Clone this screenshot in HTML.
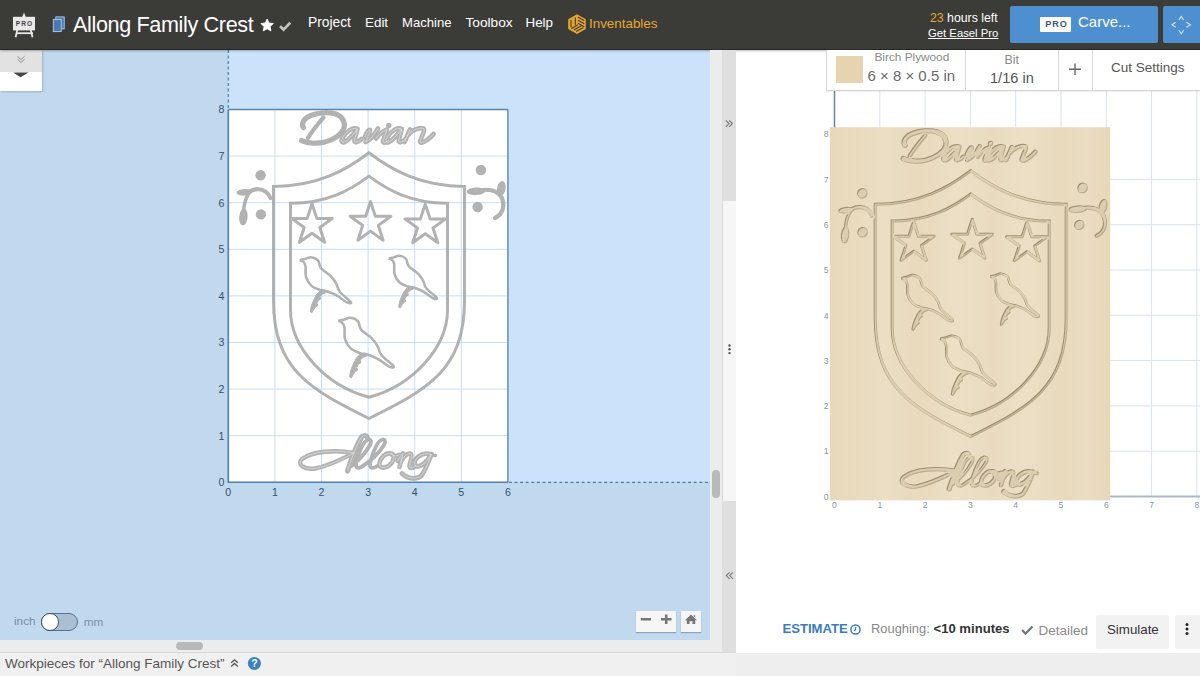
<!DOCTYPE html>
<html><head><meta charset="utf-8">
<style>
*{box-sizing:border-box;margin:0;padding:0}
html,body{width:1200px;height:676px;overflow:hidden;background:#fff;font-family:"Liberation Sans",sans-serif}
.a{position:absolute}
.t{position:absolute;white-space:pre;font-family:"Liberation Sans",sans-serif}
</style></head><body>
<!-- LEFT PANE -->
<div class="a" style="left:0;top:50px;width:710px;height:590px;background:#c0d9ef"></div>
<div class="a" style="left:228px;top:50px;width:482px;height:432px;background:#cae3fa"></div>


<!-- CANVAS LEFT -->
<svg class="a" style="left:0;top:0" width="710" height="640" viewBox="0 0 710 640">
 <rect x="228.3" y="109.5" width="279.6" height="372.8" fill="#fff"/>
 <g stroke="#c9ddf0" stroke-width="1"><line x1="274.9" y1="109.5" x2="274.9" y2="482.3"/><line x1="321.5" y1="109.5" x2="321.5" y2="482.3"/><line x1="368.1" y1="109.5" x2="368.1" y2="482.3"/><line x1="414.7" y1="109.5" x2="414.7" y2="482.3"/><line x1="461.3" y1="109.5" x2="461.3" y2="482.3"/><line x1="228.3" y1="435.7" x2="507.9" y2="435.7"/><line x1="228.3" y1="389.1" x2="507.9" y2="389.1"/><line x1="228.3" y1="342.5" x2="507.9" y2="342.5"/><line x1="228.3" y1="295.9" x2="507.9" y2="295.9"/><line x1="228.3" y1="249.3" x2="507.9" y2="249.3"/><line x1="228.3" y1="202.7" x2="507.9" y2="202.7"/><line x1="228.3" y1="156.1" x2="507.9" y2="156.1"/></g>
 <g id="artL" opacity="0.82"><path d="M369,418.5 C310.2,389.4 273.5,369.8 273.5,300.2 L273.5,186.4 C317.9,186.4 347,169.6 369,152.8 C391.0,169.6 420.1,186.4 464.5,186.4 L464.5,300.2 C464.5,369.8 427.8,389.4 369,418.5Z" fill="none" stroke="#a2a2a2" stroke-width="3"/>
<path d="M369,397.2 C326.5,386.3 290.5,348 290.5,310 L290.5,203.2 C327.1,203.3 351,189.7 369,176.1 C387.0,189.7 410.9,203.3 447.5,203.2 L447.5,310 C447.5,348 411.5,386.3 369,397.2Z" fill="none" stroke="#a2a2a2" stroke-width="3"/>
<path d="M312.0,203.6 L316.8,218.4 L332.4,218.4 L319.8,227.5 L324.6,242.3 L312.0,233.2 L299.4,242.3 L304.2,227.5 L291.6,218.4 L307.2,218.4Z" fill="none" stroke="#a2a2a2" stroke-width="3" stroke-linejoin="round"/>
<path d="M370.5,201.5 L375.3,216.3 L390.9,216.3 L378.3,225.4 L383.1,240.2 L370.5,231.1 L357.9,240.2 L362.7,225.4 L350.1,216.3 L365.7,216.3Z" fill="none" stroke="#a2a2a2" stroke-width="3" stroke-linejoin="round"/>
<path d="M425.2,204.1 L430.1,218.9 L445.6,218.9 L433.0,228.0 L437.8,242.8 L425.2,233.7 L412.7,242.8 L417.5,228.0 L404.9,218.9 L420.4,218.9Z" fill="none" stroke="#a2a2a2" stroke-width="3" stroke-linejoin="round"/>
<path d="M299.8,260.1 C300.6,259.9 302.7,259.6 304.6,259.1 C306.5,258.6 309.1,256.9 311.3,257.2 C313.6,257.4 316.5,258.8 318.1,260.6 C319.7,262.5 318.9,265.7 321.0,268.3 C323.1,270.9 328.1,273.4 330.6,276.0 C333.2,278.6 334.8,281.1 336.3,283.7 C337.8,286.3 337.3,288.8 339.7,291.8 C342.1,294.8 349.6,300.1 350.8,301.9 C352.0,303.7 349.3,303.5 346.9,302.4 C344.5,301.3 339.7,297.1 336.3,295.2 C332.9,293.3 329.4,292.1 326.7,291.2 C324.0,290.3 322.6,290.8 320.0,289.9 C317.4,289.0 313.6,287.8 311.3,285.6 C309.0,283.4 307.0,280.1 306.0,276.9 C305.0,273.7 305.9,268.8 305.5,266.3 C305.1,263.8 304.6,263.0 303.7,262.0 C302.8,261.0 300.4,260.4 299.8,260.1" fill="none" stroke="#a2a2a2" stroke-width="2.6" stroke-linejoin="round"/>
<path d="M320.5,290.3 L316.5,294.5 L313.2,301.0 L311.3,306.0 L310.2,311.8 L311.8,312.8 L313.8,309.5 L315.6,306.8 L317.8,305.8 L316.8,303.2 L318.6,300.0 L320.6,299.0 L320.0,296.2 L323.0,293.8 L326.5,292.3 L324.0,290.2Z" fill="#a2a2a2" stroke="#a2a2a2" stroke-width="1" stroke-linejoin="round"/>
<path d="M388.8,258.5 C389.6,258.3 391.5,258.0 393.3,257.6 C395.1,257.1 397.5,255.5 399.6,255.8 C401.7,256.0 404.5,257.2 406.0,259.0 C407.5,260.7 406.8,263.8 408.7,266.2 C410.7,268.6 415.4,271.0 417.8,273.4 C420.1,275.9 421.7,278.2 423.1,280.7 C424.5,283.2 424.0,285.4 426.3,288.3 C428.6,291.1 435.6,296.1 436.7,297.8 C437.9,299.5 435.3,299.3 433.1,298.3 C430.8,297.2 426.3,293.2 423.1,291.5 C419.9,289.7 416.6,288.6 414.1,287.7 C411.5,286.9 410.2,287.4 407.8,286.5 C405.4,285.6 401.8,284.5 399.6,282.5 C397.4,280.4 395.5,277.3 394.6,274.3 C393.7,271.3 394.5,266.7 394.2,264.3 C393.8,262.0 393.4,261.3 392.5,260.3 C391.6,259.3 389.4,258.8 388.8,258.5" fill="none" stroke="#a2a2a2" stroke-width="2.6" stroke-linejoin="round"/>
<path d="M408.3,286.9 L404.5,290.8 L401.4,296.9 L399.6,301.6 L398.6,307.1 L400.1,308.0 L402.0,304.9 L403.7,302.4 L405.7,301.5 L404.8,299.0 L406.5,296.0 L408.4,295.1 L407.8,292.4 L410.6,290.2 L413.9,288.8 L411.5,286.8Z" fill="#a2a2a2" stroke="#a2a2a2" stroke-width="1" stroke-linejoin="round"/>
<path d="M338.3,320.9 C339.2,320.7 341.4,320.3 343.5,319.8 C345.6,319.3 348.3,317.5 350.7,317.8 C353.2,318.0 356.3,319.4 358.1,321.4 C359.8,323.4 358.9,327.0 361.2,329.8 C363.4,332.5 368.8,335.3 371.6,338.1 C374.3,340.8 376.1,343.5 377.7,346.4 C379.4,349.2 378.8,351.9 381.4,355.1 C384.0,358.4 392.1,364.1 393.4,366.0 C394.7,368.0 391.8,367.8 389.2,366.6 C386.6,365.4 381.4,360.8 377.7,358.8 C374.1,356.8 370.3,355.4 367.4,354.5 C364.4,353.5 362.9,354.1 360.1,353.1 C357.3,352.1 353.2,350.8 350.7,348.4 C348.2,346.1 346.0,342.5 345.0,339.0 C344.0,335.6 344.9,330.3 344.5,327.6 C344.0,324.9 343.5,324.1 342.5,323.0 C341.5,321.8 339.0,321.2 338.3,320.9" fill="none" stroke="#a2a2a2" stroke-width="2.6" stroke-linejoin="round"/>
<path d="M360.7,353.5 L356.3,358.1 L352.8,365.1 L350.7,370.5 L349.5,376.7 L351.3,377.8 L353.4,374.3 L355.4,371.3 L357.7,370.3 L356.7,367.4 L358.6,364.0 L360.8,362.9 L360.1,359.9 L363.4,357.3 L367.1,355.7 L364.4,353.4Z" fill="#a2a2a2" stroke="#a2a2a2" stroke-width="1" stroke-linejoin="round"/>
<circle cx="260.6" cy="175.3" r="5.2" fill="#a2a2a2"/>
<circle cx="260.9" cy="214.4" r="5.2" fill="#a2a2a2"/>
<ellipse cx="244.5" cy="192.3" rx="8" ry="3.3" transform="rotate(-4 244.5 192.3)" fill="#a2a2a2"/>
<path d="M247,194 C252,188 265,186 270.5,198" fill="none" stroke="#a2a2a2" stroke-width="4.2" stroke-linecap="round"/>
<path d="M248.5,194 C245,199 244,205 243.5,212" fill="none" stroke="#a2a2a2" stroke-width="3.5" stroke-linecap="round"/>
<ellipse cx="243.4" cy="217" rx="4.2" ry="8.5" transform="rotate(5 243.4 217)" fill="#a2a2a2"/>
<circle cx="480.9" cy="170" r="5.3" fill="#a2a2a2"/>
<circle cx="477.6" cy="207" r="5.2" fill="#a2a2a2"/>
<ellipse cx="476" cy="191.3" rx="9.5" ry="3.8" transform="rotate(-3 476 191.3)" fill="#a2a2a2"/>
<path d="M472,192 C486,188 497,189 502,198 C505,206 503,214 495,218" fill="none" stroke="#a2a2a2" stroke-width="4.2" stroke-linecap="round"/>
<ellipse cx="501.3" cy="188.5" rx="4.3" ry="7.5" transform="rotate(10 501.3 188.5)" fill="#a2a2a2"/>
<path d="M303.5,127.5 C300.5,124 304,118 311.5,115.3 C318,113 328,112 335,113.8 C342,116 345.5,121 344,128 C342,134 334,140 324,142.3 C316,144 306,143 301.5,140.5" fill="none" stroke="#a2a2a2" stroke-width="5.2" stroke-linecap="round"/>
<path d="M323.5,117.5 C318,124 312,131 308,138" fill="none" stroke="#a2a2a2" stroke-width="4.2" stroke-linecap="round"/>
<path d="M357.5,129 C352.5,127 346.5,131 342.5,138 C340.5,141 342.5,143.5 345.5,141.5 C349.5,139 354.5,133 357.5,129 L354.5,140 C354.0,143 357.5,143 361.5,139" fill="none" stroke="#a2a2a2" stroke-width="4.7" stroke-linecap="round" stroke-linejoin="round"/>
<path d="M365,136.5 C367,132 369,129 370,130 C370.5,131 368,137 365.5,142 C370,140 375,134 378,128.5" fill="none" stroke="#a2a2a2" stroke-width="4.7" stroke-linecap="round" stroke-linejoin="round"/>
<path d="M376,138.5 C379,134 383,131 387,129.5 L383,141 C382.5,143.5 386,143 389,140" fill="none" stroke="#a2a2a2" stroke-width="4.7" stroke-linecap="round" stroke-linejoin="round"/>
<path d="M401.8,129 C396.8,127 390.8,131 386.8,138 C384.8,141 386.8,143.5 389.8,141.5 C393.8,139 398.8,133 401.8,129 L398.8,140 C398.3,143 401.8,143 405.8,139" fill="none" stroke="#a2a2a2" stroke-width="4.7" stroke-linecap="round" stroke-linejoin="round"/>
<path d="M404.5,142 L410,129.5 M407,136 C412,130 419,127 423.5,128.5 C425,129.5 424,132 422.5,135 L420,141.5 C420,143.5 424,142.5 427,140 C430,138 432,136 433.5,134" fill="none" stroke="#a2a2a2" stroke-width="4.7" stroke-linecap="round" stroke-linejoin="round"/>
<path d="M357.5,129 C352.5,127 346.5,131 342.5,138 C340.5,141 342.5,143.5 345.5,141.5 C349.5,139 354.5,133 357.5,129 L354.5,140 C354.0,143 357.5,143 361.5,139" fill="none" stroke="#fff" stroke-opacity="0.55" stroke-width="0.8" stroke-linecap="round" stroke-linejoin="round"/>
<path d="M365,136.5 C367,132 369,129 370,130 C370.5,131 368,137 365.5,142 C370,140 375,134 378,128.5" fill="none" stroke="#fff" stroke-opacity="0.55" stroke-width="0.8" stroke-linecap="round" stroke-linejoin="round"/>
<path d="M376,138.5 C379,134 383,131 387,129.5 L383,141 C382.5,143.5 386,143 389,140" fill="none" stroke="#fff" stroke-opacity="0.55" stroke-width="0.8" stroke-linecap="round" stroke-linejoin="round"/>
<path d="M401.8,129 C396.8,127 390.8,131 386.8,138 C384.8,141 386.8,143.5 389.8,141.5 C393.8,139 398.8,133 401.8,129 L398.8,140 C398.3,143 401.8,143 405.8,139" fill="none" stroke="#fff" stroke-opacity="0.55" stroke-width="0.8" stroke-linecap="round" stroke-linejoin="round"/>
<path d="M404.5,142 L410,129.5 M407,136 C412,130 419,127 423.5,128.5 C425,129.5 424,132 422.5,135 L420,141.5 C420,143.5 424,142.5 427,140 C430,138 432,136 433.5,134" fill="none" stroke="#fff" stroke-opacity="0.55" stroke-width="0.8" stroke-linecap="round" stroke-linejoin="round"/>
<circle cx="388.8" cy="125.5" r="2.7" fill="#a2a2a2"/>
<path d="M354,453 C336,449.5 312,451 302,459 C296.5,464 304,470 315,468.5 C329,466 342,459 354,453" fill="none" stroke="#a2a2a2" stroke-width="4.4" stroke-linecap="round" stroke-linejoin="round"/>
<path d="M347.5,471 C351,460 356,446 361.5,437 C363,435 366,435 367,437" fill="none" stroke="#a2a2a2" stroke-width="5.2" stroke-linecap="round" stroke-linejoin="round"/>
<path d="M362,437.5 C358.5,446 354.5,456 352.5,464" fill="none" stroke="#a2a2a2" stroke-width="3.4" stroke-linecap="round" stroke-linejoin="round"/>
<path d="M351.5,466 C358,461 366,452 370,445 C372,441.5 371,439 368.5,439.5 C366,440 363.5,443 361.5,447.5 C359,453 356.5,460 356,464.5 C355.5,468.5 359.5,469 363.5,465.5" fill="none" stroke="#a2a2a2" stroke-width="3.8" stroke-linecap="round" stroke-linejoin="round"/>
<path d="M363.5,465.5 C371,461 380,452 384,445 C386,441.5 385,439 382.5,439.5 C380,440 377.5,443 375.5,447.5 C373,453 370.5,460 370,464.5 C369.5,468.5 373.5,469 378,465.5" fill="none" stroke="#a2a2a2" stroke-width="3.8" stroke-linecap="round" stroke-linejoin="round"/>
<path d="M391,453.5 C384,452.5 379,460 379.5,465 C380,469 388,468.5 392,462.5 C394.5,458.5 394.5,454 391,453.5 C393,456.5 396,456.5 399,455" fill="none" stroke="#a2a2a2" stroke-width="4.6" stroke-linecap="round" stroke-linejoin="round"/>
<path d="M397.5,461 C399.5,457 401.5,455 403,453.5 L399.5,467 M401,461.5 C404,455.5 408.5,452.5 411,454 C412.5,455.5 410.5,461.5 409.5,465.5 C409,469 413,468.5 416,465.5" fill="none" stroke="#a2a2a2" stroke-width="4.6" stroke-linecap="round" stroke-linejoin="round"/>
<path d="M430.5,454.5 C422.5,451 414,459 414.5,464 C415,468.5 422,466.5 427,460.5 L431.5,454 C428.5,462 425.5,470 421.5,475.5 C417.5,479.5 408,479.5 402,473.5" fill="none" stroke="#a2a2a2" stroke-width="4.8" stroke-linecap="round" stroke-linejoin="round"/>
<path d="M431,454 C433,455 434.5,456 435.5,455.5" fill="none" stroke="#a2a2a2" stroke-width="3.5" stroke-linecap="round" stroke-linejoin="round"/>
<path d="M354,453 C336,449.5 312,451 302,459 C296.5,464 304,470 315,468.5 C329,466 342,459 354,453" fill="none" stroke="#fff" stroke-opacity="0.55" stroke-width="0.8" stroke-linecap="round" stroke-linejoin="round"/>
<path d="M347.5,471 C351,460 356,446 361.5,437 C363,435 366,435 367,437" fill="none" stroke="#fff" stroke-opacity="0.55" stroke-width="0.8" stroke-linecap="round" stroke-linejoin="round"/>
<path d="M391,453.5 C384,452.5 379,460 379.5,465 C380,469 388,468.5 392,462.5 C394.5,458.5 394.5,454 391,453.5 C393,456.5 396,456.5 399,455" fill="none" stroke="#fff" stroke-opacity="0.55" stroke-width="0.8" stroke-linecap="round" stroke-linejoin="round"/>
<path d="M397.5,461 C399.5,457 401.5,455 403,453.5 L399.5,467 M401,461.5 C404,455.5 408.5,452.5 411,454 C412.5,455.5 410.5,461.5 409.5,465.5 C409,469 413,468.5 416,465.5" fill="none" stroke="#fff" stroke-opacity="0.55" stroke-width="0.8" stroke-linecap="round" stroke-linejoin="round"/>
<path d="M430.5,454.5 C422.5,451 414,459 414.5,464 C415,468.5 422,466.5 427,460.5 L431.5,454 C428.5,462 425.5,470 421.5,475.5 C417.5,479.5 408,479.5 402,473.5" fill="none" stroke="#fff" stroke-opacity="0.55" stroke-width="0.8" stroke-linecap="round" stroke-linejoin="round"/></g>
  <path d="M507.9 109.5 L507.9 482.3" stroke="#6f95b8" stroke-width="1.6"/>
 <path d="M228.3 109.5 L507.9 109.5" stroke="#5a84aa" stroke-width="1.6"/>
 <path d="M228.3 109.5 L228.3 482.3 L507.9 482.3" stroke="#4f7fae" stroke-width="1.6" fill="none"/>
 <path d="M228.3 50 L228.3 109.5" stroke="#4f7aa0" stroke-width="1.2" stroke-dasharray="3 2.5"/>
 <path d="M508.9 482.3 L710 482.3" stroke="#4f7aa0" stroke-width="1.3" stroke-dasharray="3 2.6"/>
 <g font-family="Liberation Sans" font-size="10.6" fill="#34506c" text-anchor="middle"><text x="228.3" y="496">0</text><text x="274.9" y="496">1</text><text x="321.5" y="496">2</text><text x="368.1" y="496">3</text><text x="414.7" y="496">4</text><text x="461.3" y="496">5</text><text x="507.9" y="496">6</text><text x="224.5" y="486.1" text-anchor="end">0</text><text x="224.5" y="439.5" text-anchor="end">1</text><text x="224.5" y="392.9" text-anchor="end">2</text><text x="224.5" y="346.3" text-anchor="end">3</text><text x="224.5" y="299.7" text-anchor="end">4</text><text x="224.5" y="253.1" text-anchor="end">5</text><text x="224.5" y="206.5" text-anchor="end">6</text><text x="224.5" y="159.9" text-anchor="end">7</text><text x="224.5" y="113.3" text-anchor="end">8</text></g>
</svg>
<!-- tab top-left -->
<div class="a" style="left:0;top:50px;width:42px;height:41px;background:#fff;box-shadow:1px 1px 2px rgba(0,0,0,.18)"></div>
<div class="a" style="left:0;top:50px;width:42px;height:22.4px;background:#e2e2e2"></div>
<svg class="a" style="left:0;top:50px" width="42" height="41" viewBox="0 0 42 41">
 <path d="M17.5 6.3 L21 9.5 L24.5 6.3 M17.5 9.3 L21 12.5 L24.5 9.3" stroke="#8a8a8a" stroke-width="1" fill="none"/>
 <path d="M13.3 22.4 L20.5 27.2 L28.5 22.4 Z" fill="#454545"/>
</svg>
<!-- unit toggle -->
<div class="t" style="left:14px;top:615.6px;font-size:11.8px;line-height:11.4px;color:#7890a8">inch</div>
<div class="t" style="left:83.8px;top:615.6px;font-size:11.7px;line-height:11.4px;color:#7890a8">mm</div>
<div class="a" style="left:41px;top:613px;width:36.6px;height:17.6px;border-radius:9px;background:#abbfd3;border:1.2px solid #5a7290"></div>
<div class="a" style="left:41px;top:613px;width:17.6px;height:17.6px;border-radius:50%;background:#fff;border:1.5px solid #3a4a5c"></div>
<!-- zoom buttons -->
<div class="a" style="left:636px;top:611px;width:40px;height:21px;background:#f6f6f6;box-shadow:0 1px 1px rgba(70,100,130,.45)"></div>
<div class="a" style="left:680.5px;top:611px;width:20.5px;height:21px;background:#f6f6f6;box-shadow:0 1px 1px rgba(70,100,130,.45)"></div>
<svg class="a" style="left:636px;top:611px" width="66" height="21" viewBox="0 0 66 21">
 <path d="M4.8 8.3 L15 8.3 M25 8.3 L35.5 8.3 M30.2 3.5 L30.2 13" stroke="#777" stroke-width="2.6"/>
 <path d="M55 3.5 L49 9.3 L50.8 9.3 L50.8 13 L53.6 13 L53.6 10.2 L56.4 10.2 L56.4 13 L59.2 13 L59.2 9.3 L61 9.3 Z M57.8 4.2 L59.2 4.2 L59.2 6.5 L57.8 5.2 Z" fill="#777"/>
</svg>

<!-- TOP BAR -->
<div class="a" style="left:0;top:0;width:1200px;height:50px;background:#3b3b38;border-bottom:1px solid #262826;box-shadow:0 1px 2px rgba(0,0,0,.28)"></div>
<div class="t" style="left:73px;top:13.8px;font-size:21.6px;line-height:21.6px;letter-spacing:-0.36px;color:#fff">Allong Family Crest</div>
<div class="t" style="left:308px;top:16.3px;font-size:13.8px;line-height:13.5px;color:#fff">Project</div>
<div class="t" style="left:365px;top:16.3px;font-size:13.4px;line-height:13.5px;color:#fff">Edit</div>
<div class="t" style="left:402px;top:16.3px;font-size:13.1px;line-height:13.5px;color:#fff">Machine</div>
<div class="t" style="left:465.5px;top:16.3px;font-size:13.7px;line-height:13.5px;color:#fff">Toolbox</div>
<div class="t" style="left:525.5px;top:16.3px;font-size:13.4px;line-height:13.5px;color:#fff">Help</div>
<div class="t" style="left:589px;top:17.4px;font-size:13.4px;line-height:13.5px;color:#e8a830">Inventables</div>


<!-- easel icon -->
<svg class="a" style="left:0;top:0" width="80" height="50" viewBox="0 0 80 50">
 <path d="M24 12.5 L22.2 17 L25.8 17 Z" fill="#e8e8e8"/>
 <rect x="13" y="16.8" width="22" height="13.6" fill="#e9e9e9"/>
 <path d="M17.3 30 L15.6 37.2" stroke="#e8e8e8" stroke-width="1.8"/>
 <path d="M30.8 30 L32.5 37.2" stroke="#e8e8e8" stroke-width="1.8"/>
 <rect x="16" y="32.3" width="17" height="1.8" fill="#e8e8e8"/>
 <text x="24.5" y="26" font-family="Liberation Sans" font-weight="700" font-size="6.6" fill="#444" text-anchor="middle" letter-spacing="1">PRO</text>
 <rect x="55.8" y="16.9" width="8.4" height="12" fill="#4a79b2" stroke="#b0cdea" stroke-width="0.9"/>
 <rect x="53.3" y="19.4" width="8" height="12.2" fill="#4a79b2" stroke="#b0cdea" stroke-width="0.9"/>
</svg>
<!-- star + check -->
<svg class="a" style="left:255px;top:13px" width="45" height="22" viewBox="0 0 45 22">
 <path d="M12.10 6.00 L13.98 10.01 L18.38 10.56 L15.14 13.59 L15.98 17.94 L12.10 15.80 L8.22 17.94 L9.06 13.59 L5.82 10.56 L10.22 10.01Z" fill="#fff" stroke="#fff" stroke-width="0.8" stroke-linejoin="round"/>
 <path d="M25 13.3 L28.6 16.6 L35.3 9.6" stroke="#c2c2c2" stroke-width="2.8" fill="none"/>
</svg>
<!-- inventables logo -->
<svg class="a" style="left:564px;top:10px" width="28" height="28" viewBox="564 10 28 28">
 <path d="M577 14.3 L585.8 19.3 L585.8 29 L577 34 L568.2 29 L568.2 19.3 Z" fill="#e8a52c"/>
 <g stroke="#3b3b38" stroke-width="1.1" stroke-linecap="round">
  <path d="M571 20.3 L571 26.8 M575.3 17.8 L575.3 24.6"/>
  <path d="M578.3 17.3 L583.9 20.4 M578.3 20.4 L583.9 23.5 M578.3 23.4 L583.9 26.5"/>
  <path d="M571.5 28.4 L577.5 25 M574.2 29.8 L581 26 M576.6 31.3 L583 27.8"/>
 </g>
</svg>
<!-- right top -->
<div class="t" style="left:930px;top:11.6px;font-size:12.3px;line-height:12.2px;color:#fff"><span style="color:#e8a830">23</span> hours left</div>
<div class="t" style="left:928px;top:27.6px;font-size:11.3px;line-height:11.3px;color:#fff;text-decoration:underline">Get Easel Pro</div>
<div class="a" style="left:1010px;top:6px;width:147.5px;height:36.5px;background:#4e8fcf;border-radius:2px"></div>
<div class="a" style="left:1040px;top:17px;width:31px;height:15px;background:#fff;border-radius:1px"></div>
<div class="t" style="left:1041px;top:20.2px;width:31px;text-align:center;font-size:9.2px;line-height:9.2px;font-weight:700;letter-spacing:0.9px;color:#3d5878">PRO</div>
<div class="t" style="left:1078px;top:14.4px;font-size:15px;line-height:15px;color:#fff">Carve...</div>
<div class="a" style="left:1163px;top:6px;width:40px;height:36.5px;background:#4e8fcf;border-radius:2px"></div>
<svg class="a" style="left:1163px;top:6px" width="37" height="37" viewBox="0 0 37 37">
 <path d="M15.8 13.9 L18.2 10.4 L20.6 13.9 M15.8 24.2 L18.2 27.8 L20.6 24.2 M12.6 16.2 L9 18.7 L12.6 21.2 M23.4 16.2 L27.4 18.7 L23.4 21.2" stroke="#d5e6f6" stroke-width="1.1" fill="none"/>
</svg>

<!-- BOTTOM LEFT -->
<div class="a" style="left:0;top:639.5px;width:722px;height:13px;background:#ececec"></div>
<div class="a" style="left:0;top:652px;width:736px;height:24px;background:#f0f0f0;border-top:1px solid #d8d8d8"></div>
<div class="t" style="left:5px;top:656.6px;font-size:13.5px;line-height:13.5px;color:#555">Workpieces for “Allong Family Crest”</div>

<!-- SCROLL / COLLAPSE -->
<div class="a" style="left:709.5px;top:50px;width:12.5px;height:602px;background:#ececec"></div>
<div class="a" style="left:722px;top:50px;width:14px;height:151px;background:#dfdfdf"></div>
<div class="a" style="left:722px;top:201px;width:14px;height:300px;background:#f6f6f6;border-left:1px solid #d8d8d8"></div>
<div class="a" style="left:722px;top:501px;width:14px;height:151px;background:#dfdfdf"></div>


<!-- RIGHT PANE -->
<svg class="a" style="left:0;top:0" width="1200" height="676" viewBox="0 0 1200 676">
 <defs>
  <filter id="eng" x="0" y="0" width="1200" height="676" filterUnits="userSpaceOnUse">
   <feOffset in="SourceAlpha" dx="0.9" dy="0.9" result="off"/>
   <feComposite in="SourceAlpha" in2="off" operator="out" result="edgeTL"/>
   <feFlood flood-color="#9d8e72"/>
   <feComposite in2="edgeTL" operator="in" result="darkEdge"/>
   <feOffset in="SourceAlpha" dx="-0.8" dy="-0.8" result="off2"/>
   <feComposite in="SourceAlpha" in2="off2" operator="out" result="edgeBR"/>
   <feFlood flood-color="#b9aa8d"/>
   <feComposite in2="edgeBR" operator="in" result="lightEdge"/>
   <feFlood flood-color="#dccdb0"/>
   <feComposite in2="SourceAlpha" operator="in" result="grooveFill"/>
   <feMerge><feMergeNode in="grooveFill"/><feMergeNode in="darkEdge"/><feMergeNode in="lightEdge"/></feMerge>
  </filter>
  <linearGradient id="wood" x1="0" y1="0" x2="1" y2="0">
   <stop offset="0" stop-color="#e8d8bb"/><stop offset="0.1" stop-color="#eadbbf"/><stop offset="0.2" stop-color="#ebdec4"/>
   <stop offset="0.32" stop-color="#e9d9bd"/><stop offset="0.45" stop-color="#ecdfc6"/><stop offset="0.58" stop-color="#eadbc0"/>
   <stop offset="0.7" stop-color="#ecdfc5"/><stop offset="0.82" stop-color="#e9dabe"/><stop offset="0.92" stop-color="#ebddc2"/><stop offset="1" stop-color="#e7d7ba"/>
  </linearGradient>
 </defs>
 <g stroke="#d7e3ef" stroke-width="1"><line x1="879.8" y1="90" x2="879.8" y2="496.5"/><line x1="925.1" y1="90" x2="925.1" y2="496.5"/><line x1="970.4" y1="90" x2="970.4" y2="496.5"/><line x1="1015.7" y1="90" x2="1015.7" y2="496.5"/><line x1="1061.0" y1="90" x2="1061.0" y2="496.5"/><line x1="1106.3" y1="90" x2="1106.3" y2="496.5"/><line x1="1151.6" y1="90" x2="1151.6" y2="496.5"/><line x1="1196.9" y1="90" x2="1196.9" y2="496.5"/><line x1="834.5" y1="451.2" x2="1200" y2="451.2"/><line x1="834.5" y1="405.9" x2="1200" y2="405.9"/><line x1="834.5" y1="360.6" x2="1200" y2="360.6"/><line x1="834.5" y1="315.3" x2="1200" y2="315.3"/><line x1="834.5" y1="270.0" x2="1200" y2="270.0"/><line x1="834.5" y1="224.7" x2="1200" y2="224.7"/><line x1="834.5" y1="179.4" x2="1200" y2="179.4"/></g>
 <path d="M834.5 90 L834.5 496.5" stroke="#6d89a6" stroke-width="1.6"/>
 <path d="M834.5 496.5 L1200 496.5" stroke="#a9b9ca" stroke-width="2.2"/>
 <g font-family="Liberation Sans" font-size="8.6" fill="#8a96a6" text-anchor="middle"><text x="834.5" y="508">0</text><text x="879.8" y="508">1</text><text x="925.1" y="508">2</text><text x="970.4" y="508">3</text><text x="1015.7" y="508">4</text><text x="1061.0" y="508">5</text><text x="1106.3" y="508">6</text><text x="1151.6" y="508">7</text><text x="1196.9" y="508">8</text><text x="828.5" y="499.7" text-anchor="end">0</text><text x="828.5" y="454.4" text-anchor="end">1</text><text x="828.5" y="409.1" text-anchor="end">2</text><text x="828.5" y="363.8" text-anchor="end">3</text><text x="828.5" y="318.5" text-anchor="end">4</text><text x="828.5" y="273.2" text-anchor="end">5</text><text x="828.5" y="227.9" text-anchor="end">6</text><text x="828.5" y="182.6" text-anchor="end">7</text><text x="828.5" y="137.3" text-anchor="end">8</text></g>
 <rect x="829.8" y="127.2" width="280.4" height="373.2" fill="url(#wood)"/>
 <g transform="translate(601.7 17.9)" filter="url(#eng)"><path d="M369,418.5 C310.2,389.4 273.5,369.8 273.5,300.2 L273.5,186.4 C317.9,186.4 347,169.6 369,152.8 C391.0,169.6 420.1,186.4 464.5,186.4 L464.5,300.2 C464.5,369.8 427.8,389.4 369,418.5Z" fill="none" stroke="#000" stroke-width="3"/>
<path d="M369,397.2 C326.5,386.3 290.5,348 290.5,310 L290.5,203.2 C327.1,203.3 351,189.7 369,176.1 C387.0,189.7 410.9,203.3 447.5,203.2 L447.5,310 C447.5,348 411.5,386.3 369,397.2Z" fill="none" stroke="#000" stroke-width="3"/>
<path d="M312.0,203.6 L316.8,218.4 L332.4,218.4 L319.8,227.5 L324.6,242.3 L312.0,233.2 L299.4,242.3 L304.2,227.5 L291.6,218.4 L307.2,218.4Z" fill="none" stroke="#000" stroke-width="3" stroke-linejoin="round"/>
<path d="M370.5,201.5 L375.3,216.3 L390.9,216.3 L378.3,225.4 L383.1,240.2 L370.5,231.1 L357.9,240.2 L362.7,225.4 L350.1,216.3 L365.7,216.3Z" fill="none" stroke="#000" stroke-width="3" stroke-linejoin="round"/>
<path d="M425.2,204.1 L430.1,218.9 L445.6,218.9 L433.0,228.0 L437.8,242.8 L425.2,233.7 L412.7,242.8 L417.5,228.0 L404.9,218.9 L420.4,218.9Z" fill="none" stroke="#000" stroke-width="3" stroke-linejoin="round"/>
<path d="M299.8,260.1 C300.6,259.9 302.7,259.6 304.6,259.1 C306.5,258.6 309.1,256.9 311.3,257.2 C313.6,257.4 316.5,258.8 318.1,260.6 C319.7,262.5 318.9,265.7 321.0,268.3 C323.1,270.9 328.1,273.4 330.6,276.0 C333.2,278.6 334.8,281.1 336.3,283.7 C337.8,286.3 337.3,288.8 339.7,291.8 C342.1,294.8 349.6,300.1 350.8,301.9 C352.0,303.7 349.3,303.5 346.9,302.4 C344.5,301.3 339.7,297.1 336.3,295.2 C332.9,293.3 329.4,292.1 326.7,291.2 C324.0,290.3 322.6,290.8 320.0,289.9 C317.4,289.0 313.6,287.8 311.3,285.6 C309.0,283.4 307.0,280.1 306.0,276.9 C305.0,273.7 305.9,268.8 305.5,266.3 C305.1,263.8 304.6,263.0 303.7,262.0 C302.8,261.0 300.4,260.4 299.8,260.1" fill="none" stroke="#000" stroke-width="2.6" stroke-linejoin="round"/>
<path d="M320.5,290.3 L316.5,294.5 L313.2,301.0 L311.3,306.0 L310.2,311.8 L311.8,312.8 L313.8,309.5 L315.6,306.8 L317.8,305.8 L316.8,303.2 L318.6,300.0 L320.6,299.0 L320.0,296.2 L323.0,293.8 L326.5,292.3 L324.0,290.2Z" fill="#000" stroke="#000" stroke-width="1" stroke-linejoin="round"/>
<path d="M388.8,258.5 C389.6,258.3 391.5,258.0 393.3,257.6 C395.1,257.1 397.5,255.5 399.6,255.8 C401.7,256.0 404.5,257.2 406.0,259.0 C407.5,260.7 406.8,263.8 408.7,266.2 C410.7,268.6 415.4,271.0 417.8,273.4 C420.1,275.9 421.7,278.2 423.1,280.7 C424.5,283.2 424.0,285.4 426.3,288.3 C428.6,291.1 435.6,296.1 436.7,297.8 C437.9,299.5 435.3,299.3 433.1,298.3 C430.8,297.2 426.3,293.2 423.1,291.5 C419.9,289.7 416.6,288.6 414.1,287.7 C411.5,286.9 410.2,287.4 407.8,286.5 C405.4,285.6 401.8,284.5 399.6,282.5 C397.4,280.4 395.5,277.3 394.6,274.3 C393.7,271.3 394.5,266.7 394.2,264.3 C393.8,262.0 393.4,261.3 392.5,260.3 C391.6,259.3 389.4,258.8 388.8,258.5" fill="none" stroke="#000" stroke-width="2.6" stroke-linejoin="round"/>
<path d="M408.3,286.9 L404.5,290.8 L401.4,296.9 L399.6,301.6 L398.6,307.1 L400.1,308.0 L402.0,304.9 L403.7,302.4 L405.7,301.5 L404.8,299.0 L406.5,296.0 L408.4,295.1 L407.8,292.4 L410.6,290.2 L413.9,288.8 L411.5,286.8Z" fill="#000" stroke="#000" stroke-width="1" stroke-linejoin="round"/>
<path d="M338.3,320.9 C339.2,320.7 341.4,320.3 343.5,319.8 C345.6,319.3 348.3,317.5 350.7,317.8 C353.2,318.0 356.3,319.4 358.1,321.4 C359.8,323.4 358.9,327.0 361.2,329.8 C363.4,332.5 368.8,335.3 371.6,338.1 C374.3,340.8 376.1,343.5 377.7,346.4 C379.4,349.2 378.8,351.9 381.4,355.1 C384.0,358.4 392.1,364.1 393.4,366.0 C394.7,368.0 391.8,367.8 389.2,366.6 C386.6,365.4 381.4,360.8 377.7,358.8 C374.1,356.8 370.3,355.4 367.4,354.5 C364.4,353.5 362.9,354.1 360.1,353.1 C357.3,352.1 353.2,350.8 350.7,348.4 C348.2,346.1 346.0,342.5 345.0,339.0 C344.0,335.6 344.9,330.3 344.5,327.6 C344.0,324.9 343.5,324.1 342.5,323.0 C341.5,321.8 339.0,321.2 338.3,320.9" fill="none" stroke="#000" stroke-width="2.6" stroke-linejoin="round"/>
<path d="M360.7,353.5 L356.3,358.1 L352.8,365.1 L350.7,370.5 L349.5,376.7 L351.3,377.8 L353.4,374.3 L355.4,371.3 L357.7,370.3 L356.7,367.4 L358.6,364.0 L360.8,362.9 L360.1,359.9 L363.4,357.3 L367.1,355.7 L364.4,353.4Z" fill="#000" stroke="#000" stroke-width="1" stroke-linejoin="round"/>
<circle cx="260.6" cy="175.3" r="5.2" fill="#000"/>
<circle cx="260.9" cy="214.4" r="5.2" fill="#000"/>
<ellipse cx="244.5" cy="192.3" rx="8" ry="3.3" transform="rotate(-4 244.5 192.3)" fill="#000"/>
<path d="M247,194 C252,188 265,186 270.5,198" fill="none" stroke="#000" stroke-width="4.2" stroke-linecap="round"/>
<path d="M248.5,194 C245,199 244,205 243.5,212" fill="none" stroke="#000" stroke-width="3.5" stroke-linecap="round"/>
<ellipse cx="243.4" cy="217" rx="4.2" ry="8.5" transform="rotate(5 243.4 217)" fill="#000"/>
<circle cx="480.9" cy="170" r="5.3" fill="#000"/>
<circle cx="477.6" cy="207" r="5.2" fill="#000"/>
<ellipse cx="476" cy="191.3" rx="9.5" ry="3.8" transform="rotate(-3 476 191.3)" fill="#000"/>
<path d="M472,192 C486,188 497,189 502,198 C505,206 503,214 495,218" fill="none" stroke="#000" stroke-width="4.2" stroke-linecap="round"/>
<ellipse cx="501.3" cy="188.5" rx="4.3" ry="7.5" transform="rotate(10 501.3 188.5)" fill="#000"/>
<path d="M303.5,127.5 C300.5,124 304,118 311.5,115.3 C318,113 328,112 335,113.8 C342,116 345.5,121 344,128 C342,134 334,140 324,142.3 C316,144 306,143 301.5,140.5" fill="none" stroke="#000" stroke-width="5.2" stroke-linecap="round"/>
<path d="M323.5,117.5 C318,124 312,131 308,138" fill="none" stroke="#000" stroke-width="4.2" stroke-linecap="round"/>
<path d="M357.5,129 C352.5,127 346.5,131 342.5,138 C340.5,141 342.5,143.5 345.5,141.5 C349.5,139 354.5,133 357.5,129 L354.5,140 C354.0,143 357.5,143 361.5,139" fill="none" stroke="#000" stroke-width="4.7" stroke-linecap="round" stroke-linejoin="round"/>
<path d="M365,136.5 C367,132 369,129 370,130 C370.5,131 368,137 365.5,142 C370,140 375,134 378,128.5" fill="none" stroke="#000" stroke-width="4.7" stroke-linecap="round" stroke-linejoin="round"/>
<path d="M376,138.5 C379,134 383,131 387,129.5 L383,141 C382.5,143.5 386,143 389,140" fill="none" stroke="#000" stroke-width="4.7" stroke-linecap="round" stroke-linejoin="round"/>
<path d="M401.8,129 C396.8,127 390.8,131 386.8,138 C384.8,141 386.8,143.5 389.8,141.5 C393.8,139 398.8,133 401.8,129 L398.8,140 C398.3,143 401.8,143 405.8,139" fill="none" stroke="#000" stroke-width="4.7" stroke-linecap="round" stroke-linejoin="round"/>
<path d="M404.5,142 L410,129.5 M407,136 C412,130 419,127 423.5,128.5 C425,129.5 424,132 422.5,135 L420,141.5 C420,143.5 424,142.5 427,140 C430,138 432,136 433.5,134" fill="none" stroke="#000" stroke-width="4.7" stroke-linecap="round" stroke-linejoin="round"/>
<circle cx="388.8" cy="125.5" r="2.7" fill="#000"/>
<path d="M354,453 C336,449.5 312,451 302,459 C296.5,464 304,470 315,468.5 C329,466 342,459 354,453" fill="none" stroke="#000" stroke-width="4.4" stroke-linecap="round" stroke-linejoin="round"/>
<path d="M347.5,471 C351,460 356,446 361.5,437 C363,435 366,435 367,437" fill="none" stroke="#000" stroke-width="5.2" stroke-linecap="round" stroke-linejoin="round"/>
<path d="M362,437.5 C358.5,446 354.5,456 352.5,464" fill="none" stroke="#000" stroke-width="3.4" stroke-linecap="round" stroke-linejoin="round"/>
<path d="M351.5,466 C358,461 366,452 370,445 C372,441.5 371,439 368.5,439.5 C366,440 363.5,443 361.5,447.5 C359,453 356.5,460 356,464.5 C355.5,468.5 359.5,469 363.5,465.5" fill="none" stroke="#000" stroke-width="3.8" stroke-linecap="round" stroke-linejoin="round"/>
<path d="M363.5,465.5 C371,461 380,452 384,445 C386,441.5 385,439 382.5,439.5 C380,440 377.5,443 375.5,447.5 C373,453 370.5,460 370,464.5 C369.5,468.5 373.5,469 378,465.5" fill="none" stroke="#000" stroke-width="3.8" stroke-linecap="round" stroke-linejoin="round"/>
<path d="M391,453.5 C384,452.5 379,460 379.5,465 C380,469 388,468.5 392,462.5 C394.5,458.5 394.5,454 391,453.5 C393,456.5 396,456.5 399,455" fill="none" stroke="#000" stroke-width="4.6" stroke-linecap="round" stroke-linejoin="round"/>
<path d="M397.5,461 C399.5,457 401.5,455 403,453.5 L399.5,467 M401,461.5 C404,455.5 408.5,452.5 411,454 C412.5,455.5 410.5,461.5 409.5,465.5 C409,469 413,468.5 416,465.5" fill="none" stroke="#000" stroke-width="4.6" stroke-linecap="round" stroke-linejoin="round"/>
<path d="M430.5,454.5 C422.5,451 414,459 414.5,464 C415,468.5 422,466.5 427,460.5 L431.5,454 C428.5,462 425.5,470 421.5,475.5 C417.5,479.5 408,479.5 402,473.5" fill="none" stroke="#000" stroke-width="4.8" stroke-linecap="round" stroke-linejoin="round"/>
<path d="M431,454 C433,455 434.5,456 435.5,455.5" fill="none" stroke="#000" stroke-width="3.5" stroke-linecap="round" stroke-linejoin="round"/></g>
</svg>
<!-- right toolbar -->
<div class="a" style="left:825.5px;top:50px;width:380px;height:40.5px;background:#fff;border-left:1px solid #d8d8d8;border-bottom:1.5px solid #d5d5d5;box-shadow:0 1px 1px rgba(0,0,0,.05)"></div>
<div class="a" style="left:835.8px;top:56.3px;width:27.2px;height:27px;background:#e6d4b0"></div>
<div class="a" style="left:965px;top:50px;width:1px;height:40px;background:#dadada"></div>
<div class="a" style="left:1058.2px;top:50px;width:1px;height:40px;background:#dadada"></div>
<div class="a" style="left:1091.8px;top:50px;width:1px;height:40px;background:#dadada"></div>
<div class="t" style="left:874.5px;top:52.3px;font-size:11.8px;line-height:11.6px;color:#8a8a8a">Birch Plywood</div>
<div class="t" style="left:867.5px;top:68.2px;font-size:15px;line-height:15px;color:#6a6a6a">6 × 8 × 0.5 in</div>
<div class="t" style="left:1004.4px;top:53.8px;font-size:12.5px;line-height:12.5px;color:#8a8a8a">Bit</div>
<div class="t" style="left:990px;top:70.6px;font-size:14.6px;line-height:14.5px;color:#555">1/16 in</div>
<svg class="a" style="left:1068px;top:63px" width="14" height="13" viewBox="0 0 14 13"><path d="M1 6.2 L13 6.2 M7 0.5 L7 12" stroke="#666" stroke-width="1.4"/></svg>
<div class="t" style="left:1111px;top:60.6px;font-size:13.5px;line-height:13.5px;color:#555">Cut Settings</div>
<!-- estimate bar -->
<div class="t" style="left:782.5px;top:623.3px;font-size:13.1px;line-height:12.8px;font-weight:700;color:#3a7cbc">ESTIMATE</div>
<svg class="a" style="left:849px;top:623px" width="14" height="14" viewBox="0 0 14 14"><circle cx="6.5" cy="6.5" r="4.6" fill="none" stroke="#3a7cbc" stroke-width="1.5"/><path d="M6.5 4 L6.5 6.8 L4.8 7.8" stroke="#3a7cbc" stroke-width="1.3" fill="none"/></svg>
<div class="t" style="left:871px;top:622.9px;font-size:12.9px;line-height:12.9px;color:#888">Roughing:</div>
<div class="t" style="left:933.5px;top:623.2px;font-size:13.1px;line-height:12.8px;font-weight:700;color:#333">&lt;10 minutes</div>
<svg class="a" style="left:1020px;top:624px" width="14" height="12" viewBox="0 0 14 12"><path d="M2 6 L5.5 9.5 L12.5 2.5" stroke="#777" stroke-width="2.3" fill="none"/></svg>
<div class="t" style="left:1038.5px;top:623.6px;font-size:13.5px;line-height:13.3px;color:#8a8a8a">Detailed</div>
<div class="a" style="left:1095.5px;top:614.6px;width:73.5px;height:34.4px;background:#f2f2f2;border-radius:2px"></div>
<div class="t" style="left:1107px;top:622.5px;font-size:13.3px;line-height:13.3px;color:#333">Simulate</div>
<div class="a" style="left:1174.7px;top:614.6px;width:30px;height:34.4px;background:#f2f2f2;border-radius:2px"></div>
<svg class="a" style="left:1183px;top:622px" width="8" height="14" viewBox="0 0 8 14"><circle cx="4" cy="2.6" r="1.5" fill="#222"/><circle cx="4" cy="7" r="1.5" fill="#222"/><circle cx="4" cy="11.4" r="1.5" fill="#222"/></svg>


<!-- scroll thumbs, chevrons, help -->
<div class="a" style="left:175.5px;top:642px;width:27.3px;height:8.4px;border-radius:4.2px;background:#b9b9b9"></div>
<div class="a" style="left:711.7px;top:469.6px;width:8.7px;height:28px;border-radius:4.3px;background:#b9b9b9"></div>
<svg class="a" style="left:722px;top:50px" width="14" height="602" viewBox="0 0 14 602">
 <path d="M3.8 70.3 L7 73.6 L3.8 76.9 M7.2 70.3 L10.4 73.6 L7.2 76.9" stroke="#777" stroke-width="1.1" fill="none"/>
 <circle cx="7.5" cy="295.5" r="1.2" fill="#555"/><circle cx="7.5" cy="299.3" r="1.2" fill="#555"/><circle cx="7.5" cy="303.1" r="1.2" fill="#555"/>
 <path d="M7.5 522.3 L4.3 525.6 L7.5 528.9 M10.9 522.3 L7.7 525.6 L10.9 528.9" stroke="#777" stroke-width="1.1" fill="none"/>
</svg>
<svg class="a" style="left:228px;top:656px" width="36" height="16" viewBox="0 0 36 16">
 <path d="M3.2 6.8 L6.5 3.8 L9.8 6.8 M3.2 10.5 L6.5 7.5 L9.8 10.5" stroke="#555" stroke-width="1.3" fill="none"/>
 <circle cx="26.4" cy="7.4" r="6.5" fill="#3b80c2"/>
 <text x="26.4" y="11.2" font-family="Liberation Sans" font-weight="700" font-size="10.5" fill="#fff" text-anchor="middle">?</text>
</svg>

<!-- RIGHT PANE BOTTOM -->
<div class="a" style="left:736px;top:653px;width:464px;height:23px;background:#eeeeee"></div>
</body></html>
